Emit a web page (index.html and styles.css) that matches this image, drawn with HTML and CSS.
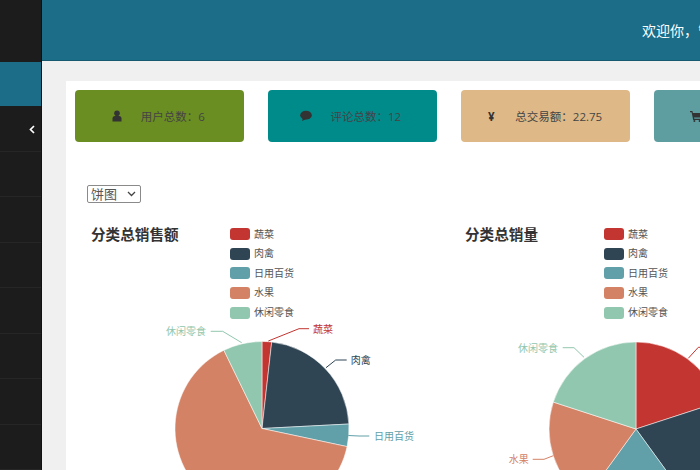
FILE: index.html
```html
<!DOCTYPE html>
<html lang="zh-CN">
<head>
    <meta charset="UTF-8">
    <meta name="viewport" content="width=device-width, initial-scale=1.0">
    <title>后台首页</title>
    <link rel="stylesheet" href="styles.css">
</head>
<body>
    <div class="app">
        <aside class="sidebar">
            <div class="side-top"></div>
            <div class="side-active"></div>
            <div class="side-row toggle">
                <svg class="chevron" width="6" height="9" viewBox="0 0 6 9"><path d="M5 1 L1.5 4.5 L5 8" fill="none" stroke="#fff" stroke-width="1.7"/></svg>
            </div>
            <div class="side-row"></div>
            <div class="side-row"></div>
            <div class="side-row"></div>
            <div class="side-row"></div>
            <div class="side-row"></div>
            <div class="side-row"></div>
            <div class="side-row"></div>
        </aside>
        <div class="main">
            <header class="topbar">
                <span class="welcome">欢迎你，管理员</span>
            </header>
            <div class="content">
                <div class="panel">
                    <div class="cards">
                        <div class="card card-green">
                            <svg class="card-icon" width="12" height="12" viewBox="0 0 12 12"><circle cx="6" cy="3.2" r="2.8" fill="#333"/><path d="M1.5 11.5 V8.5 Q1.5 6 4 6 H8 Q10.5 6 10.5 8.5 V11.5 Z" fill="#333"/></svg>
                            <span>用户总数：6</span>
                        </div>
                        <div class="card card-teal">
                            <svg class="card-icon" width="12" height="12" viewBox="0 0 12 12"><ellipse cx="6" cy="5.2" rx="5.8" ry="4.4" fill="#333"/><path d="M3 8 L2 11 L6.5 9 Z" fill="#333"/></svg>
                            <span>评论总数：12</span>
                        </div>
                        <div class="card card-tan">
                            <span class="card-icon yen">¥</span>
                            <span>总交易额：22.75</span>
                        </div>
                        <div class="card card-blue">
                            <svg class="card-icon" width="12" height="12" viewBox="0 0 12 12"><path d="M0 1 H2.4 L2.9 3 H12 L10.8 7.5 H4 L4.3 8.8 H10.8 V10 H3.2 L1.6 2.2 H0 Z" fill="#333"/><circle cx="4.4" cy="11" r="1" fill="#333"/><circle cx="9.6" cy="11" r="1" fill="#333"/></svg>
                        </div>
                    </div>

                    <select class="chart-type">
                        <option>饼图</option>
                        <option>柱状图</option>
                    </select>

                    <div class="charts">
                        <!-- 分类总销售额 -->
                        <svg class="chart" width="374" height="260" viewBox="0 0 374 260">
                            <text class="chart-title" x="4" y="24">分类总销售额</text>
                            <g class="legend">
                                <rect x="143" y="12" width="20" height="12" rx="3" fill="#c23531"/><text x="167" y="21.5">蔬菜</text>
                                <rect x="143" y="32" width="20" height="12" rx="3" fill="#2f4554"/><text x="167" y="41">肉禽</text>
                                <rect x="143" y="51" width="20" height="12" rx="3" fill="#61a0a8"/><text x="167" y="60.5">日用百货</text>
                                <rect x="143" y="71" width="20" height="12" rx="3" fill="#d48265"/><text x="167" y="80">水果</text>
                                <rect x="143" y="91" width="20" height="12" rx="3" fill="#91c7ae"/><text x="167" y="100">休闲零食</text>
                            </g>
                            <g class="slices">
                                <path d="M175 212.5 L175 125.5 A87 87 0 0 1 184.7 126 Z" fill="#c23531"/>
                                <path d="M175 212.5 L184.7 126 A87 87 0 0 1 261.9 208 Z" fill="#2f4554"/>
                                <path d="M175 212.5 L261.9 208 A87 87 0 0 1 260.1 230.6 Z" fill="#61a0a8"/>
                                <path d="M175 212.5 L260.1 230.6 A87 87 0 1 1 136.9 134.3 Z" fill="#d48265"/>
                                <path d="M175 212.5 L136.9 134.3 A87 87 0 0 1 175 125.5 Z" fill="#91c7ae"/>
                            </g>
                            <g class="leaders">
                                <path d="M181.3 125 L212 112.7 H222" stroke="#c23531"/>
                                <path d="M239 151.7 L248.7 144 H259.7" stroke="#2f4554"/>
                                <path d="M261.3 219.5 L272 220 H282.3" stroke="#61a0a8"/>
                                <path d="M154.7 126.7 L135.7 115.3 H123.7" stroke="#91c7ae"/>
                            </g>
                            <g class="labels">
                                <text x="226" y="116.5" fill="#c23531">蔬菜</text>
                                <text x="263.7" y="147.8" fill="#2f4554">肉禽</text>
                                <text x="287" y="224" fill="#61a0a8">日用百货</text>
                                <text x="119" y="119" text-anchor="end" fill="#91c7ae">休闲零食</text>
                            </g>
                        </svg>
                        <!-- 分类总销量 -->
                        <svg class="chart" width="374" height="260" viewBox="0 0 374 260">
                            <text class="chart-title" x="4" y="24">分类总销量</text>
                            <g class="legend">
                                <rect x="143" y="12" width="20" height="12" rx="3" fill="#c23531"/><text x="167" y="21.5">蔬菜</text>
                                <rect x="143" y="32" width="20" height="12" rx="3" fill="#2f4554"/><text x="167" y="41">肉禽</text>
                                <rect x="143" y="51" width="20" height="12" rx="3" fill="#61a0a8"/><text x="167" y="60.5">日用百货</text>
                                <rect x="143" y="71" width="20" height="12" rx="3" fill="#d48265"/><text x="167" y="80">水果</text>
                                <rect x="143" y="91" width="20" height="12" rx="3" fill="#91c7ae"/><text x="167" y="100">休闲零食</text>
                            </g>
                            <g class="slices">
                                <path d="M175 213 L175 126 A87 87 0 0 1 257.7 186.1 Z" fill="#c23531"/>
                                <path d="M175 213 L257.7 186.1 A87 87 0 0 1 226.1 283.4 Z" fill="#2f4554"/>
                                <path d="M175 213 L226.1 283.4 A87 87 0 0 1 123.9 283.4 Z" fill="#61a0a8"/>
                                <path d="M175 213 L123.9 283.4 A87 87 0 0 1 92.3 186.1 Z" fill="#d48265"/>
                                <path d="M175 213 L92.3 186.1 A87 87 0 0 1 175 126 Z" fill="#91c7ae"/>
                            </g>
                            <g class="leaders">
                                <path d="M227.3 142.3 L237.3 131.3 H249" stroke="#c23531"/>
                                <path d="M123 141.3 L113 131.7 H101.7" stroke="#91c7ae"/>
                                <path d="M92.3 239.7 L83 243.3 H71.7" stroke="#d48265"/>
                            </g>
                            <g class="labels">
                                <text x="97" y="135.5" text-anchor="end" fill="#91c7ae">休闲零食</text>
                                <text x="67.7" y="247" text-anchor="end" fill="#d48265">水果</text>
                            </g>
                        </svg>
                    </div>
                </div>
            </div>
        </div>
    </div>
</body>
</html>
```

FILE: styles.css
```css
html, body {
    margin: 0;
    height: 100%;
    overflow: hidden;
}
body {
    font-family: "Open Sans", "Noto Sans CJK SC", sans-serif;
    background-color: #fff;
}
.app {
    display: flex;
    width: 900px;
    height: 470px;
}
.sidebar {
    width: 42px;
    flex-shrink: 0;
    box-sizing: border-box;
    background-color: #1c1c1c;
    border-right: 1px solid #111;
}
.side-top {
    height: 62px;
}
.side-active {
    height: 44px;
    background-color: #1b6d88;
}
.side-row {
    height: 45.5px;
    box-sizing: border-box;
    border-bottom: 1px solid #262626;
}
.toggle {
    display: flex;
    justify-content: flex-end;
    align-items: flex-start;
    padding: 19px 6px 0 0;
}
.main {
    flex: 1;
    min-width: 0;
    display: flex;
    flex-direction: column;
}
.topbar {
    height: 61px;
    flex-shrink: 0;
    box-sizing: border-box;
    background-color: #1b6d88;
    border-bottom: 1px solid #175a70;
    display: flex;
    align-items: center;
    padding-left: 600px;
}
.welcome {
    color: #fff;
    font-size: 14px;
    white-space: nowrap;
}
.content {
    flex: 1;
    background-color: #f0f0f1;
    padding: 20px 0 0 24px;
}
.panel {
    height: 100%;
    background-color: #fff;
    padding: 9px 0 0 9px;
}
.cards {
    display: flex;
    gap: 24.5px;
}
.card {
    width: 168.5px;
    height: 52px;
    flex-shrink: 0;
    box-sizing: border-box;
    padding-right: 3px;
    border-radius: 4px;
    display: flex;
    justify-content: center;
    align-items: center;
    gap: 18px;
    font-size: 11.5px;
    color: #444;
}
.card-icon {
    width: 12px;
    flex-shrink: 0;
    text-align: center;
}
.yen {
    font-weight: bold;
    color: #333;
}
.card-green {
    background-color: #6b8e23;
}
.card-teal {
    background-color: #008b8b;
}
.card-tan {
    background-color: #deb887;
}
.card-blue {
    background-color: #5f9ea0;
    justify-content: flex-start;
    padding-left: 36px;
}
.chart-type {
    display: block;
    width: 54px;
    height: 18px;
    margin: 43px 0 0 12px;
    padding: 0 0 0 3px;
    font-family: "Open Sans", "Noto Sans CJK SC", sans-serif;
    font-size: 13px;
    line-height: 16px;
    color: #555;
    background: #fff url("data:image/svg+xml,%3Csvg xmlns='http://www.w3.org/2000/svg' width='9' height='6'%3E%3Cpath d='M1 1l3.5 3.5L8 1' fill='none' stroke='%23444' stroke-width='1.3'/%3E%3C/svg%3E") no-repeat right 4px center;
    border: 1px solid #8a8a8a;
    border-radius: 2px;
    appearance: none;
}
.charts {
    display: flex;
    margin: 13px 0 0 12px;
}
.chart {
    display: block;
    flex-shrink: 0;
}
.chart-title {
    font-size: 14.6px;
    font-weight: bold;
    fill: #333;
}
.legend text {
    font-size: 10px;
    fill: #555;
}
.labels text {
    font-size: 10px;
}
.slices path {
    stroke: #fff;
    stroke-width: 0.5;
}
.leaders path {
    fill: none;
    stroke-width: 1;
}
```
